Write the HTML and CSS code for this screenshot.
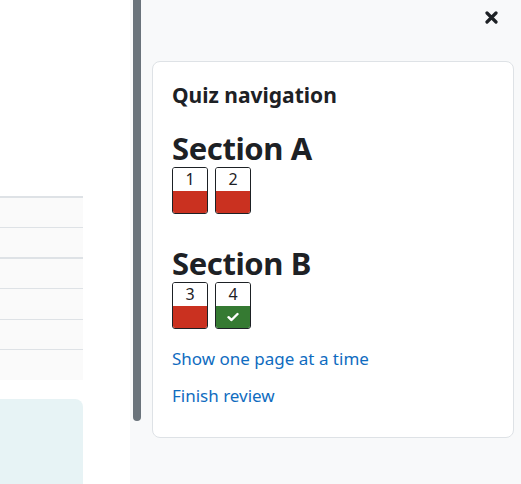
FILE: index.html
```html
<!DOCTYPE html>
<html lang="en">
<head>
    <meta charset="UTF-8">
    <meta name="viewport" content="width=device-width, initial-scale=1.0">
    <title>Quiz review</title>
    <link rel="stylesheet" href="styles.css">
</head>
<body>
    <div class="page">
        <main class="content">
            <table class="summary">
                <tbody class="group">
                    <tr><td></td></tr>
                    <tr><td></td></tr>
                </tbody>
                <tbody class="group">
                    <tr><td></td></tr>
                    <tr><td></td></tr>
                    <tr><td></td></tr>
                    <tr><td></td></tr>
                </tbody>
            </table>
            <div class="feedback"></div>
        </main>

        <aside class="drawer">
            <div class="scroll-thumb"></div>
            <div class="drawer-body">
                <div class="drawer-header">
                    <button type="button" class="close-btn" aria-label="Close">
                        <svg width="13" height="13" viewBox="0 0 13 13">
                            <path d="M2 2 L11 11 M11 2 L2 11" stroke="#1d2125" stroke-width="3.2" stroke-linecap="round"/>
                        </svg>
                    </button>
                </div>

                <div class="card">
                    <h3 class="card-title">Quiz navigation</h3>

                    <h2 class="section-title">Section A</h2>
                    <div class="qn-buttons">
                        <a class="qn-btn incorrect"><span class="qn-num">1</span><span class="qn-state"></span></a>
                        <a class="qn-btn incorrect"><span class="qn-num">2</span><span class="qn-state"></span></a>
                    </div>

                    <h2 class="section-title">Section B</h2>
                    <div class="qn-buttons">
                        <a class="qn-btn incorrect"><span class="qn-num">3</span><span class="qn-state"></span></a>
                        <a class="qn-btn correct"><span class="qn-num">4</span><span class="qn-state">
                            <svg width="12" height="10" viewBox="0 0 12 10">
                                <path d="M1.5 5.2 L4.5 8 L10.5 2" fill="none" stroke="#fff" stroke-width="2.4" stroke-linecap="round" stroke-linejoin="round"/>
                            </svg>
                        </span></a>
                    </div>

                    <div class="nav-links">
                        <a href="#">Show one page at a time</a>
                        <a href="#">Finish review</a>
                    </div>
                </div>
            </div>
        </aside>
    </div>
</body>
</html>
```

FILE: styles.css
```css
* {
    box-sizing: border-box;
}
body {
    margin: 0;
    font-family: "Noto Sans", "Open Sans", Arial, sans-serif;
    color: #1d2125;
    background: #fff;
}
.page {
    display: flex;
    height: 484px;
    overflow: hidden;
}
.content {
    width: 130px;
    flex-shrink: 0;
    background: #fff;
    padding-top: 196px;
}
.summary {
    width: 83px;
    border-collapse: collapse;
}
.summary td {
    height: 30.5px;
    padding: 0;
    background: #fafafa;
    border-bottom: 1px solid #dee2e6;
}
.summary tr:last-child td {
    border-bottom: none;
}
.summary .group {
    border-top: 2px solid #dee2e6;
}
.feedback {
    width: 83px;
    height: 90px;
    margin-top: 19px;
    background: #e7f3f5;
    border-top-right-radius: 8px;
}
.drawer {
    flex: 1;
    display: flex;
    background: #f8f9fa;
}
.scroll-thumb {
    width: 8px;
    height: 421px;
    margin-left: 3px;
    background: #6a737b;
    border-radius: 0 0 4px 4px;
    flex-shrink: 0;
}
.drawer-body {
    flex: 1;
    padding: 0 7px 0 11px;
}
.drawer-header {
    height: 61px;
    display: flex;
    justify-content: flex-end;
    align-items: flex-start;
    padding-top: 11px;
    padding-right: 16px;
}
.close-btn {
    border: none;
    background: none;
    padding: 0;
    width: 13px;
    height: 13px;
    cursor: pointer;
}
.close-btn svg {
    display: block;
}
.card {
    background: #fff;
    border: 1px solid #dee2e6;
    border-radius: 8px;
    height: 377px;
    padding: 20px 19px;
}
.card-title {
    margin: 0 0 21px;
    font-size: 21px;
    font-weight: 700;
    line-height: 26px;
}
.section-title {
    margin: 0;
    font-size: 31px;
    font-weight: 700;
    line-height: 38px;
    letter-spacing: -0.4px;
}
.qn-buttons {
    display: flex;
    gap: 7px;
    margin-bottom: 30px;
}
.qn-btn {
    width: 36px;
    height: 47px;
    border: 1px solid #1d2125;
    border-radius: 3px;
    overflow: hidden;
    display: flex;
    flex-direction: column;
    text-decoration: none;
    color: #1d2125;
}
.qn-num {
    height: 23px;
    text-align: center;
    font-size: 16px;
    line-height: 22px;
    background: #fff;
}
.qn-state {
    flex: 1;
    display: flex;
    align-items: center;
    justify-content: center;
}
.incorrect .qn-state {
    background: #ca3120;
}
.correct .qn-state {
    background: #357a32;
}
.nav-links {
    display: flex;
    flex-direction: column;
    gap: 13px;
    margin-top: -12px;
}
.nav-links a {
    color: #0f6cbf;
    text-decoration: none;
    font-size: 17px;
    line-height: 24px;
}
```
